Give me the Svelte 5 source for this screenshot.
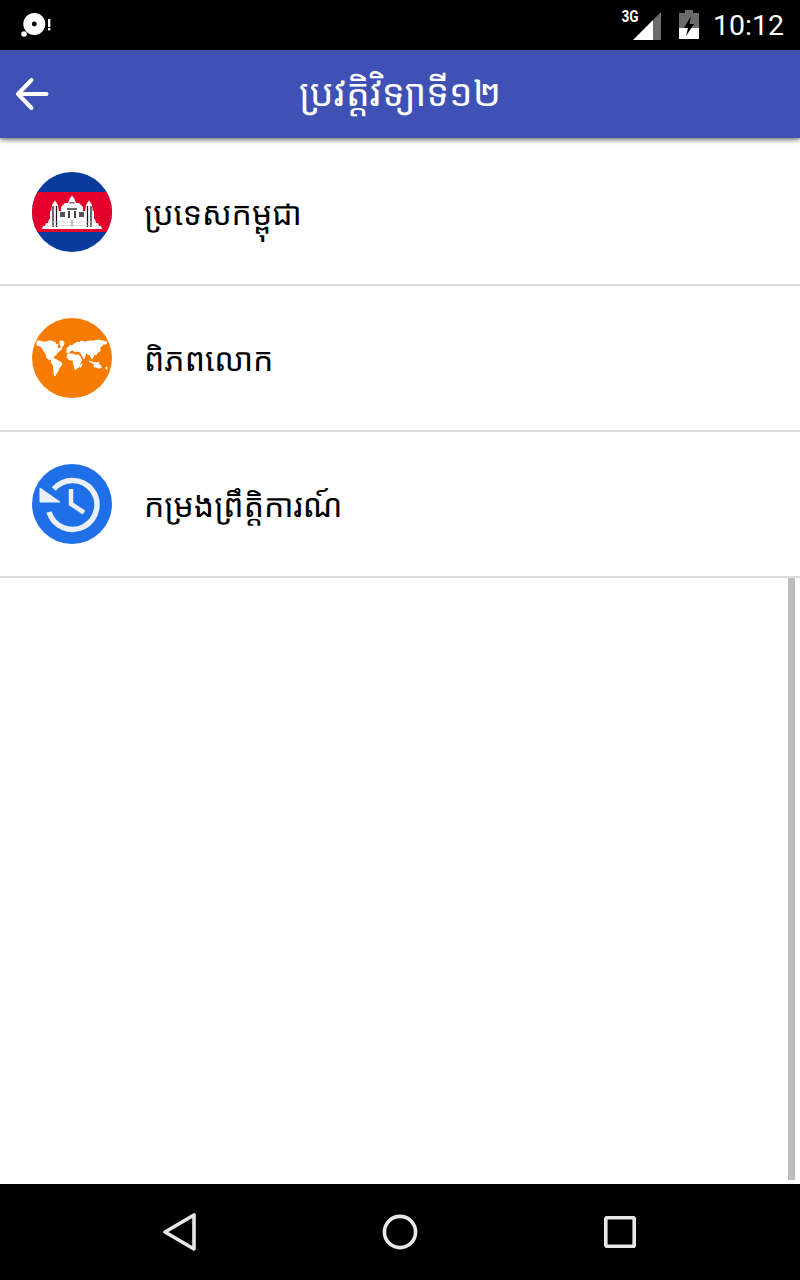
<script>
  const rows = [
    { label: 'ប្រទេសកម្ពុជា', icon: 'flag' },
    { label: 'ពិភពលោក', icon: 'world' },
    { label: 'កម្រងព្រឹត្តិការណ៍', icon: 'history' }
  ];
</script>

<div class="screen">
  <header class="status">
    <svg class="notif" width="34" height="24" viewBox="0 0 34 24">
      <circle cx="14.3" cy="11" r="11" fill="#fff" />
      <circle cx="14.3" cy="11" r="2.4" fill="#000" />
      <circle cx="4" cy="21" r="2.8" fill="#fff" />
      <rect x="28" y="6" width="2.4" height="8" fill="#fff" />
      <rect x="28" y="15" width="2.4" height="2.4" fill="#fff" />
    </svg>
    <div class="status-right">
      <span class="net">3G</span>
      <svg class="signal" width="30" height="30" viewBox="0 0 30 30">
        <path d="M1 29 L21 9 V29 Z" fill="#fff" />
        <path d="M21 9 L29 1 V29 H21 Z" fill="#6b6b6b" />
      </svg>
      <svg class="battery" width="20" height="30" viewBox="0 0 20 30">
        <path d="M6 0 H14 V3 H20 V29 H0 V3 H6 Z" fill="#6b6b6b" />
        <path d="M0 18 H20 V29 H0 Z" fill="#fff" />
        <path d="M12 6 L5 18 H9 L7 26 L15 14 H10.5 Z" fill="#000" />
      </svg>
      <span class="clock">10:12</span>
    </div>
  </header>

  <div class="appbar">
    <svg class="back" width="36" height="36" viewBox="0 0 36 36" fill="none" stroke="#fff" stroke-width="4" stroke-linecap="round" stroke-linejoin="round">
      <path d="M32.5 18 H4.5 M17.5 4 L4 18 L17.5 32" />
    </svg>
    <h1 class="title">ប្រវត្តិវិទ្យាទី១២</h1>
  </div>

  <main class="list">
    <div class="scrollbar"></div>
    {#each rows as row}
      <div class="row">
        {#if row.icon === 'flag'}
          <svg class="icon" viewBox="0 0 80 80">
            <defs><clipPath id="f"><circle cx="40" cy="40" r="40" /></clipPath></defs>
            <g clip-path="url(#f)">
              <rect width="80" height="80" fill="#0a3a9c" />
              <rect y="20" width="80" height="40" fill="#e4002b" />
              <path d="M10 57 L11 54 L13 54 L14 51 L16 51 L17 47 H63 L64 51 H66 L67 54 H69 L70 57 Z" fill="#fff" />
              <path d="M18 47 V39 H29 V35 L33 31 L36 31 L37.5 27 L40 23.5 L42.5 27 L44 31 L47 31 L51 35 V39 H62 V47 Z" fill="#fff" />
              <path d="M23 28.5 L26 33 L27 40 V47 H19 V40 L20 33 Z M57 28.5 L60 33 L61 40 V47 H53 V40 L54 33 Z" fill="#fff" />
              <path d="M21 34 V55 M24.5 34 V55 M55.5 34 V55 M59 34 V55" stroke="#1a1a1a" stroke-width="1.3" />
              <path d="M28 40 H33 V45 H28 Z M47 40 H52 V45 H47 Z" fill="#555" />
              <path d="M35 36 H45 V38 H35 Z M37.5 30 H42.5 V31.5 H37.5 Z" fill="#666" />
              <path d="M36 39 H38 V46 H36 Z M42 39 H44 V46 H42 Z" fill="#444" />
              <path d="M39.3 48 H40.7 V55 H39.3 Z" fill="#aaa" />
              <path d="M14 53.5 H66 M17 50 H63" stroke="#c4c4c4" stroke-width="0.6" />
            </g>
          </svg>
        {:else if row.icon === 'world'}
          <svg class="icon" viewBox="0 0 80 80">
            <circle cx="40" cy="40" r="40" fill="#f57c00" />
            <g fill="#fff" stroke="#fff" stroke-width="0.9" stroke-linejoin="round">
              <path d="M5 23 H9 L10 24 H15 L16 23 H20 L21 24 H23 L24 27 L26 26 L25 29 L27 31 L30 29 L29 32 L27 33 L25 35 L24 37 L22 38 L21 41 L19 40 L18 42 L15 40 L14 36 L12 33 L10 30 L8 28 L5 27 Z" />
              <path d="M28 23 H31 L32 25 L31 28 L29 29 L28 26 Z" />
              <path d="M20 41 H23 L25 42 L28 44 L30 45 L29 48 L27 50 L26 53 L24 56 L23 58 L22 57 L22 52 L21 47 L19 44 Z" />
              <path d="M35 30 L37 29 L38 27 L40 28 L42 26 L44 25 L46 24 L47 25 L49 23 L53 24 L57 23 L62 23 L66 22 L71 23 L75 24 L74 26 L71 26 L70 28 L68 29 L68 33 L66 34 L64 37 L62 36 L61 39 L60 41 L58 37 L56 36 L54 35 L53 38 L52 41 L50 37 L48 34 L45 33 L43 34 L41 32 L38 33 L37 35 L35 35 Z" />
              <path d="M36 36 H41 L43 37 H47 L49 41 L50 42 L48 45 L47 49 L44 51 L43 52 L42 47 L41 42 L38 42 L36 41 L35 39 Z" />
              <path d="M57 43 L60 44 L64 45 L67 44 L66 46 L62 46 Z" />
              <path d="M62 47 L65 45 L67 46 L69 48 L69 50 L66 50 L64 49 L62 49 Z" />
              <path d="M74 49 L75 49 L75 51 L74 51 Z" />
              <path d="M49 46 L50 46 L49 49 L48 49 Z" />
            </g>
          </svg>
        {:else}
          <svg class="icon" viewBox="0 0 80 80">
            <circle cx="40" cy="40" r="40" fill="#1f6fe8" />
            <path d="M21.8 25 A24.5 24.5 0 1 1 17 48" fill="none" stroke="#e9f0fb" stroke-width="5.5" />
            <path d="M8 24 V38 H28 Z" fill="#e9f0fb" stroke="#e9f0fb" stroke-width="1" stroke-linejoin="round" />
            <path d="M39 25 V40 L52 48.5" fill="none" stroke="#e9f0fb" stroke-width="4.5" />
          </svg>
        {/if}
        <span class="label">{row.label}</span>
      </div>
    {/each}
  </main>

  <footer class="nav">
    <svg class="nav-icon" width="36" height="40" viewBox="0 0 36 40" fill="none" stroke="#e8e8e8" stroke-width="3.6" stroke-linejoin="round">
      <path d="M32 3 V37 L3 20 Z" />
    </svg>
    <svg class="nav-icon" width="36" height="36" viewBox="0 0 36 36" fill="none" stroke="#e8e8e8" stroke-width="3.6">
      <circle cx="18" cy="18" r="15.6" />
    </svg>
    <svg class="nav-icon" width="32" height="32" viewBox="0 0 32 32" fill="none" stroke="#e8e8e8" stroke-width="3.6" stroke-linejoin="round">
      <rect x="1.8" y="1.8" width="28.4" height="28.4" rx="1" />
    </svg>
  </footer>
</div>

<style>
  :global(body) {
    margin: 0;
    background: #fff;
  }
  .screen {
    width: 800px;
    height: 1280px;
    display: flex;
    flex-direction: column;
    overflow: hidden;
    font-family: "Noto Sans Khmer", "Khmer OS", "Roboto", "Noto Sans", sans-serif;
  }
  .status {
    height: 50px;
    background: #000;
    display: flex;
    align-items: center;
    justify-content: space-between;
    padding: 0 16px 0 20px;
    flex: none;
  }
  .status-right {
    display: flex;
    align-items: center;
  }
  .net {
    font: 700 16px "Roboto", sans-serif;
    color: #fff;
    margin: -17px -8px 0 0;
    transform: scaleX(0.85);
  }
  .signal {
    margin-right: 17px;
    margin-top: 1px;
  }
  .battery {
    margin-top: -1px;
  }
  .clock {
    font: 400 28.5px "Roboto", sans-serif;
    color: #fff;
    margin-left: 14px;
  }
  .appbar {
    height: 88px;
    background: #3f51b5;
    display: flex;
    align-items: center;
    justify-content: center;
    position: relative;
    flex: none;
    box-shadow: 0 2px 5px rgba(0, 0, 0, 0.55);
    z-index: 1;
  }
  .back {
    position: absolute;
    left: 14px;
    top: 26px;
  }
  .title {
    margin: 0 0 6px;
    font-size: 37.6px;
    font-weight: 400;
    color: #fff;
  }
  .list {
    flex: 1;
    padding-top: 2px;
    position: relative;
    background: #fff;
  }
  .scrollbar {
    position: absolute;
    right: 5px;
    top: 440px;
    bottom: 4px;
    width: 7px;
    background: #bdbdbd;
  }
  .row {
    display: flex;
    align-items: center;
    gap: 32px;
    height: 144px;
    padding-left: 32px;
    border-bottom: 2px solid #ddd;
  }
  .icon {
    width: 80px;
    height: 80px;
    flex: none;
  }
  .label {
    font-size: 32px;
    color: #000;
  }
  .nav {
    height: 96px;
    background: #000;
    flex: none;
    display: grid;
    grid-template-columns: repeat(3, 220px);
    justify-content: center;
    justify-items: center;
    align-items: center;
  }
</style>
